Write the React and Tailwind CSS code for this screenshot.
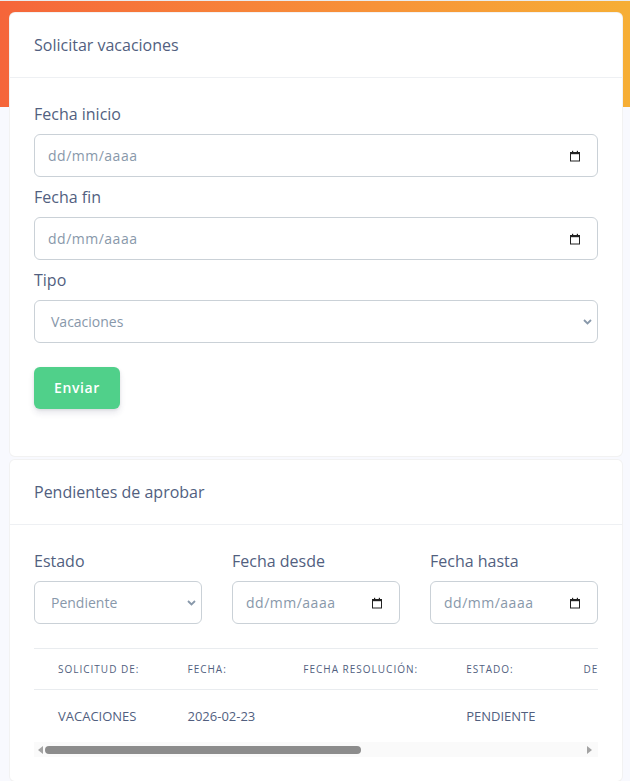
import { useState } from 'react';

const labelCls = 'block text-base leading-6 text-[#525f7f] mb-2';
const fieldCls =
  'flex items-center h-[43px] w-full rounded-md border border-[#cad1d7] bg-white text-sm text-[#8898aa]';

function CalendarIcon() {
  return (
    <svg width="12" height="12" viewBox="0 0 12 12" className="shrink-0">
      <rect x="1.5" y="2.5" width="9" height="8.5" fill="none" stroke="#222" strokeWidth="1" />
      <rect x="1.5" y="2" width="9" height="2.2" fill="#222" />
      <rect x="3" y="0.8" width="1.2" height="2" fill="#222" />
      <rect x="7.8" y="0.8" width="1.2" height="2" fill="#222" />
    </svg>
  );
}

function Chevron() {
  return (
    <svg width="9" height="6" viewBox="0 0 9 6" className="shrink-0">
      <path d="M1 1l3.5 3.5L8 1" fill="none" stroke="#8898aa" strokeWidth="1.8" />
    </svg>
  );
}

function DateField() {
  return (
    <div className={`${fieldCls} pl-[13px] pr-[16px] justify-between`}>
      <span className="tracking-[0.5px]">dd/mm/aaaa</span>
      <CalendarIcon />
    </div>
  );
}

function SelectField({ value }) {
  return (
    <div className={`${fieldCls} pl-[16px] pr-[5px] justify-between`}>
      <span>{value}</span>
      <Chevron />
    </div>
  );
}

function Card({ title, children }) {
  return (
    <div className="bg-white rounded-md border border-black/5">
      <div className="px-6 py-5 border-b border-[#eef0f3]">
        <h3 className="text-base leading-6 text-[#525f7f]">{title}</h3>
      </div>
      <div className="p-6">{children}</div>
    </div>
  );
}

const columns = ['Solicitud de:', 'Fecha:', 'Fecha resolución:', 'Estado:', 'Descripción:', 'Acciones:'];
const rows = [
  { tipo: 'VACACIONES', fecha: '2026-02-23', resolucion: '', estado: 'PENDIENTE', descripcion: '', acciones: '' },
];

export default function App() {
  const [tipo] = useState('Vacaciones');

  return (
    <div className="min-h-[781px] bg-[#f8f9fe] font-['Open_Sans',sans-serif]">
      {/* Header gradient */}
      <div className="h-[107px] border-t border-[#e9ecef] bg-gradient-to-r from-[#f5653a] to-[#f6ae35]" />

      <div className="-mt-[95px] pl-[9px] pr-[7px] flex flex-col gap-[2px]">
        <Card title="Solicitar vacaciones">
          <label className={labelCls}>Fecha inicio</label>
          <DateField />
          <label className={`${labelCls} mt-2`}>Fecha fin</label>
          <DateField />
          <label className={`${labelCls} mt-2`}>Tipo</label>
          <SelectField value={tipo} />
          <button className="mt-6 mb-[23px] h-[42px] px-5 rounded-md bg-[#50d08a] text-white text-sm font-semibold tracking-[0.6px] shadow-[0_4px_6px_rgba(50,50,93,0.11),0_1px_3px_rgba(0,0,0,0.08)]">
            Enviar
          </button>
        </Card>

        <Card title="Pendientes de aprobar">
          <div className="grid grid-cols-3 gap-x-[30px] mb-6">
            <div>
              <label className={labelCls}>Estado</label>
              <SelectField value="Pendiente" />
            </div>
            <div>
              <label className={labelCls}>Fecha desde</label>
              <DateField />
            </div>
            <div>
              <label className={labelCls}>Fecha hasta</label>
              <DateField />
            </div>
          </div>

          <div className="overflow-hidden">
            <table className="w-max border-t border-[#e9ecef] whitespace-nowrap text-left">
              <thead>
                <tr className="border-b border-[#e9ecef]">
                  {columns.map(c => (
                    <th
                      key={c}
                      className="px-6 py-3 text-[10px] leading-4 font-normal uppercase tracking-[1px] text-[#525f7f]"
                    >
                      {c}
                    </th>
                  ))}
                </tr>
              </thead>
              <tbody>
                {rows.map(r => (
                  <tr key={r.fecha}>
                    <td className="px-6 py-4 text-[13px] leading-5 text-[#525f7f]">{r.tipo}</td>
                    <td className="px-6 py-4 text-[13px] leading-5 text-[#525f7f]">{r.fecha}</td>
                    <td className="px-6 py-4 text-[13px] leading-5 text-[#525f7f]">{r.resolucion}</td>
                    <td className="px-6 py-4 text-[13px] leading-5 text-[#525f7f]">{r.estado}</td>
                    <td className="px-6 py-4 text-[13px] leading-5 text-[#525f7f]">{r.descripcion}</td>
                    <td className="px-6 py-4 text-[13px] leading-5 text-[#525f7f]">{r.acciones}</td>
                  </tr>
                ))}
              </tbody>
            </table>
          </div>

          {/* horizontal scrollbar */}
          <div className="h-[15px] bg-[#fafafa] flex items-center pl-[4px] pr-[6px] gap-[2px]">
            <svg width="5" height="8" viewBox="0 0 5 8"><path d="M5 0L0 4l5 4z" fill="#a3a3a3" /></svg>
            <div className="flex-1 flex items-center">
              <div className="h-[8px] w-[316px] rounded-full bg-[#8c8c8c]" />
            </div>
            <svg width="5" height="8" viewBox="0 0 5 8"><path d="M0 0l5 4-5 4z" fill="#a3a3a3" /></svg>
          </div>
        </Card>
      </div>
    </div>
  );
}
